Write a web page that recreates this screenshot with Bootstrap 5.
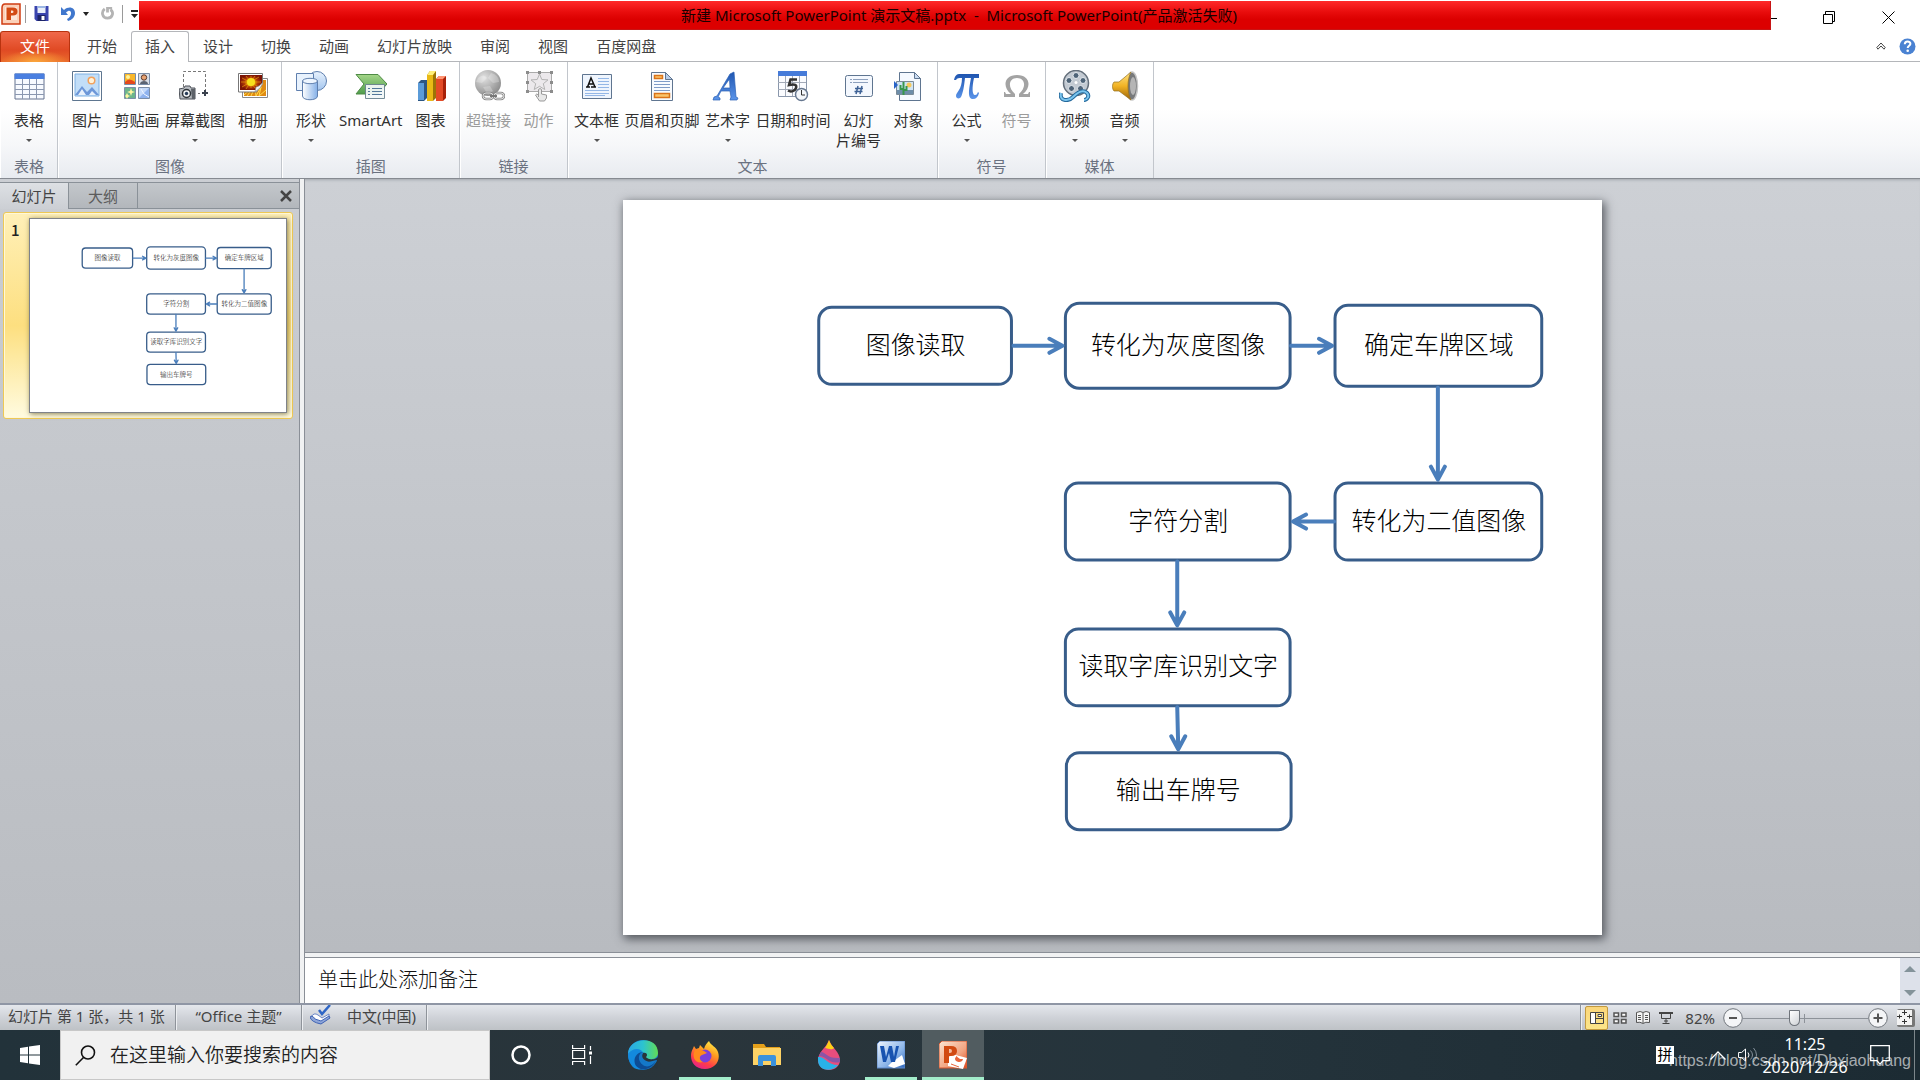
<!DOCTYPE html>
<html lang="zh-CN">
<head>
<meta charset="utf-8">
<meta name="viewport" content="width=device-width, initial-scale=1">
<title>新建 Microsoft PowerPoint 演示文稿.pptx - Microsoft PowerPoint</title>
<link href="https://cdn.jsdelivr.net/npm/bootstrap@5.3.0/dist/css/bootstrap.min.css" rel="stylesheet">
<style>
body{font-family:"Noto Sans","Noto Sans CJK SC",sans-serif;font-size:15px;line-height:20px;color:#444;background:#fff;overflow:hidden}
button{font:inherit;color:inherit;border:0;background:none;padding:0}
svg{display:block;flex:none}
/* title bar */
.titlebar{height:31px}
.quick{width:139px;padding-left:1px}
.quick .vline{width:1px;height:18px;background:#9a9a9a}
.caption-red{height:29px;margin-top:1px;padding-left:9px;background:linear-gradient(#ff2a2a,#e80c0c 40%,#dc0000 65%,#dc0000);border:1px solid #c81414;border-left:0;border-top:0;color:#1a0000}
.winbtns{width:149px}
.winbtns button{height:31px;display:flex;align-items:center;justify-content:center}
/* ribbon tabs */
.tabrow{height:31px;border-bottom:1px solid #b4b6ba}
.tabtools{gap:13px}
.rtab{height:31px;padding:0 14px;color:#444;text-decoration:none;line-height:31px}
.rtab.file-tab{width:70px;margin-right:3px;padding:0;text-align:center;color:#fff;border:1px solid #b8330f;border-bottom:0;border-radius:3px 3px 0 0;background:radial-gradient(ellipse 34px 12px at 50% 100%,#fba73c,rgba(251,140,50,0)),linear-gradient(#f0694a,#e04a24 60%,#ea6a2c);line-height:28px}
.rtab.on{background:#fff;border:1px solid #b4b6ba;border-bottom:0;border-radius:3px 3px 0 0;padding:0 13px;line-height:29px}
/* ribbon */
.ribbon{height:117px;background:linear-gradient(#fff 0,#fff 40%,#f6f7f9 72%,#e8ebf0);border-bottom:1px solid #868a91}
.rgroup{border-left:1px solid #fff;border-right:1px solid #c2c6cc;padding:8px 3px 0}
.rbtn{min-width:50px;padding:0 2px;height:82px;display:flex;flex-direction:column;align-items:center;color:#303030;white-space:nowrap}
.rbtn.wide{padding:0 3px}
.rbtn svg{margin-bottom:8px}
.rbtn:disabled{color:#9b9b9b}
.rbtn .tri{margin-top:9px}
.tri{width:0;height:0;border:3px solid transparent;border-top-color:#555;border-bottom:0}
.glabel{text-align:center;color:#6a7180;line-height:20px;margin-top:4px}
/* work area */
.sidepane{width:300px;border-right:1px solid #8a8f97;background:linear-gradient(#cbced3,#b9bcc1)}
.panetabs{height:27px;margin-top:3px;background:linear-gradient(#c3c7cb,#b2b6bb);border-top:1px solid #8a9198}
.ptab{width:69px;border-right:1px solid #8a9198;border-bottom:1px solid #8a9198;color:#5c5c5c;line-height:20px}
.ptab.on{background:linear-gradient(#dde0e4,#cccfd4);border-bottom:0;color:#444}
.panefill{border-bottom:1px solid #8a9198;padding-right:7px}
.thumbitem{margin:3px 6px 0 3px;height:207px;padding:5px 5px 5px 7px;border:1px solid #efc954;border-radius:3px;box-shadow:inset 0 0 0 1px #fff8d8;background:linear-gradient(#fff0b8,#fddf80 55%,#fde9a0 70%,#fffbe0)}
.thumbnum{width:18px;padding-top:2px;font-family:"Noto Sans CJK SC",sans-serif;font-weight:500;line-height:20px;color:#222}
.thumbpic{width:260px;height:195px;border:1px solid #7f838a;background:#fff;box-shadow:1px 1px 5px rgba(90,80,30,.7)}
.vsplit{width:4px;background:#f1f2f3}
.editor{border-left:1px solid #8a8f97}
.stage{padding:21px 17px 17px;min-height:0;background:linear-gradient(#cdd0d5,#b8bbc0);border-bottom:1px solid #8a8f97;box-shadow:inset 0 3px 3px -2px #a3a7ad}
.slide{height:100%;aspect-ratio:981/736;background:#fff;box-shadow:2px 3px 9px 1px rgba(50,54,60,.75)}
.flow{font-family:"Noto Sans CJK SC",sans-serif;font-weight:300;font-size:25px;text-anchor:middle;fill:#000}
.flow rect{fill:#fff;stroke:#385d8a;stroke-width:3}
.flow path{fill:none;stroke:#4a7ebb;stroke-width:4;stroke-linecap:round;stroke-linejoin:round}
.thumbpic .flow rect,.thumbpic .flow path{stroke-width:5}
.hsplit{height:4px;background:#f1f2f3}
.notes{height:46px;border-top:1px solid #8a8f97;background:#fff}
.notes textarea{border:0;resize:none;outline:0;padding:9px 13px 0;font-family:"Noto Sans CJK SC",sans-serif;font-weight:300;font-size:20px;line-height:24px;overflow:hidden}
.notes textarea::placeholder{color:#111;opacity:1}
.sbar{width:20px;background:#dde1ea;padding:8px 0 7px}
.sbar .tri{border-width:6px;border-top-color:#84939a;border-bottom:0}
.sbar .tri.up{border-top:0;border-bottom:6px solid #84939a}
/* status bar */
.statusbar{height:27px;border-top:2px solid #8f96a5;background:linear-gradient(#e4e7ec,#cfd2d8 50%,#bec2c6)}
.scell{border-right:1px solid #8e939a;box-shadow:1px 0 0 #eceef1;height:25px;line-height:23px;color:#444}
.viewbtn{width:23px;height:24px;display:flex;align-items:center;justify-content:center}
.viewbtn.on{border:1px solid #c39a3f;border-radius:2px;background:linear-gradient(#fbd67a,#fce68a)}
.zoomr{width:125px;height:20px;appearance:none;-webkit-appearance:none;margin:0;background:linear-gradient(#8d9299,#8d9299) 61px 6px/1px 9px no-repeat,linear-gradient(#8d9299,#8d9299) 0 10px/100% 1px no-repeat}
.zoomr::-webkit-slider-thumb{-webkit-appearance:none;width:11px;height:16px;background:linear-gradient(135deg,#fff,#cfd2d6);border:1px solid #6f747b;border-radius:1px 1px 6px 6px}
/* taskbar */
.taskbar{height:50px;background:linear-gradient(90deg,#22323a,#2a353b 35%,#25343c 60%,#1c2b33);color:#fff}
.startbtn{width:60px}
.searchbox{width:430px;background:#f1f1f1;border:1px solid #c8c8c8;padding-left:14px;gap:14px}
.searchbox input{border:0;background:none;outline:0;font-size:19px;line-height:28px;padding:0;min-width:0;color:#222;font-weight:350}
.searchbox input::placeholder{color:#222;opacity:1}
.tbtn{width:62px;height:50px;display:flex;align-items:center;justify-content:center;border:solid transparent;border-width:3px 0}
.tbtn.slim{width:61px}
.tbtn.run{width:52px;margin:0 5px;border-bottom-color:#a3edcb}
.tbtn.cur{background:#515c60;border-bottom-color:#a3edcb;border-top-color:#515c60}
.traymain{gap:36px}
.ime{width:18px;height:18px;background:#fff;color:#000;font-size:15px;line-height:17px;text-align:center}
.clock{width:94px;padding-top:3px;margin-right:2px;font-size:16px;line-height:23px;text-align:center}
.watermark{position:absolute;right:9px;bottom:8px;font-family:"Liberation Sans",Arial,sans-serif;font-size:16px;line-height:22px;color:rgba(255,255,255,.62)}
.deskline{width:6px;border-left:1px solid #7c868b}
</style>
<script src="https://cdn.jsdelivr.net/npm/bootstrap@5.3.0/dist/js/bootstrap.bundle.min.js"></script>
</head>
<body class="d-flex flex-column vh-100">
<svg width="0" height="0" class="position-absolute" aria-hidden="true">
<defs>
<linearGradient id="gBlue" x1="0" y1="0" x2="0" y2="1"><stop offset="0" stop-color="#e8f2fd"/><stop offset="1" stop-color="#a3c5ee"/></linearGradient>
<linearGradient id="gCyl" x1="0" x2="1"><stop offset="0" stop-color="#fff"/><stop offset="1" stop-color="#84b0e8"/></linearGradient>
<linearGradient id="gGrn" x1="0" y1="0" x2="0" y2="1"><stop offset="0" stop-color="#a4d688"/><stop offset="1" stop-color="#4e9c4c"/></linearGradient>
<linearGradient id="gDeep" x1="0" y1="0" x2="0" y2="1"><stop offset="0" stop-color="#1f55b0"/><stop offset="1" stop-color="#5b95ea"/></linearGradient>
<radialGradient id="gGrey" cx=".35" cy=".3" r=".8"><stop offset="0" stop-color="#e2e2e2"/><stop offset="1" stop-color="#858585"/></radialGradient>
<radialGradient id="gFlower"><stop offset="0" stop-color="#fff25a"/><stop offset=".35" stop-color="#e8a800"/><stop offset=".6" stop-color="#b33c08"/><stop offset="1" stop-color="#7c1405"/></radialGradient>
<linearGradient id="gGold" x1="0" y1="0" x2="0" y2="1"><stop offset="0" stop-color="#ffe487"/><stop offset=".5" stop-color="#f2b324"/><stop offset="1" stop-color="#9a6208"/></linearGradient>
<linearGradient id="gEdge1" x1="0" y1="0" x2="1" y2="0"><stop offset="0" stop-color="#2aa7e6"/><stop offset=".5" stop-color="#2cc3d0"/><stop offset="1" stop-color="#62dc55"/></linearGradient>
<linearGradient id="gFox" x1=".8" y1="0" x2=".3" y2="1"><stop offset="0" stop-color="#fff04a"/><stop offset=".4" stop-color="#ff9a1f"/><stop offset=".75" stop-color="#ff3c4a"/><stop offset="1" stop-color="#e5238a"/></linearGradient>
<linearGradient id="gWord" x1="0" y1="0" x2="1" y2="1"><stop offset="0" stop-color="#f2f7fd"/><stop offset=".6" stop-color="#8ab4e8"/><stop offset="1" stop-color="#2c64b8"/></linearGradient>
<linearGradient id="gPpt" x1="0" y1="0" x2="1" y2="1"><stop offset="0" stop-color="#fbe6d4"/><stop offset=".6" stop-color="#f1a481"/><stop offset="1" stop-color="#dc4b20"/></linearGradient>
</defs>
</svg>

<header>
<div class="titlebar d-flex">
  <div class="quick d-flex align-items-center pb-1">
    <svg width="20" height="22" viewBox="0 0 20 22"><path d="M4 1h15v20H1V5q0-4 3-4z" fill="#fbd0b8" stroke="#cf3c12" stroke-width="1.500"/><path d="M4 4h12v13H4z" fill="#fff" opacity=".45"/><path d="M5.500 4.500h4v0h2.500q4.500 0 4.500 4T12 12.500h-2V17H5.500zM10 7.500v2.500h1q1.500 0 1.500-1.200T11 7.500z" fill="#d34a14" fill-rule="evenodd"/></svg>
    <span class="vline ms-1"></span>
    <button class="ms-2" aria-label="保存"><svg width="15" height="15" viewBox="0 0 14 15"><path d="M0 0h14v15H2L0 13z" fill="#3a44ae"/><path d="M3 0h8v7H3z" fill="#e9effa"/><path d="M3 0h8v2H3z" fill="#9cb7e4"/><path d="M3 9h8v6H3z" fill="#1d2468"/><path d="M7 10h3v4H7z" fill="#fff"/></svg></button>
    <button class="ms-2 ps-1" aria-label="撤消"><svg width="14" height="16" viewBox="0 0 14 16"><path d="M0 1v8h7L5 6.500C8 3.500 10.500 4.500 10 8c-.5 2.500-2 4-4 5l1 2c4-1 7-4 7-8 0-5.500-6-7.500-11-3z" fill="#4077cd"/></svg></button>
    <button class="ms-2" aria-label="撤消列表"><svg width="6" height="4"><path d="M0 0h6L3 4z" fill="#222"/></svg></button>
    <button class="ms-2 ps-1" aria-label="重复"><svg width="13" height="13" viewBox="0 0 14 14"><path d="M4 2C0 5 1 12 7 12s7-7 3-9M7 6V1h5" fill="none" stroke="#b4b4b4" stroke-width="3"/></svg></button>
    <span class="vline ms-2"></span>
    <button class="ms-2" aria-label="自定义快速访问工具栏"><svg width="7" height="8"><path d="M0 0h7v2H0zM0 4h7L3.500 8z" fill="#222"/></svg></button>
  </div>
  <div class="caption-red flex-fill d-flex align-items-center justify-content-center"><span>新建 Microsoft PowerPoint 演示文稿.pptx&nbsp; -&nbsp; Microsoft PowerPoint(产品激活失败)</span></div>
  <div class="winbtns d-flex">
    <button style="width:29px" class="justify-content-start" aria-label="最小化"><svg width="6" height="6"><path d="M0 5h6v1H0z"/></svg></button>
    <button style="width:58px" class="pt-1" aria-label="还原"><svg width="12" height="13" viewBox="0 0 12 13" fill="none" stroke="#000"><path d="M.5 3.500h9v9h-9zM2.500 3V.5h9v10H10"/></svg></button>
    <button style="width:60px" class="pt-1" aria-label="关闭"><svg width="13" height="13" viewBox="0 0 13 13" stroke="#000"><path d="M.5.5l12 12M12.500.5l-12 12"/></svg></button>
  </div>
</div>
<nav class="tabrow d-flex" aria-label="功能区">
  <a href="#" class="rtab file-tab">文件</a>
  <a href="#" class="rtab">开始</a><a href="#" class="rtab on" aria-current="page">插入</a><a href="#" class="rtab">设计</a><a href="#" class="rtab">切换</a><a href="#" class="rtab">动画</a><a href="#" class="rtab">幻灯片放映</a><a href="#" class="rtab">审阅</a><a href="#" class="rtab">视图</a><a href="#" class="rtab">百度网盘</a>
  <div class="tabtools ms-auto d-flex align-items-center pe-1">
    <button aria-label="折叠功能区"><svg width="10" height="8" viewBox="0 0 10 8" fill="#fff" stroke="#444"><path d="M.8 5.500L5 1l4.200 4.500L8 7.200 5 4 2 7.200z"/></svg></button>
    <button aria-label="帮助"><svg width="17" height="17" viewBox="0 0 17 17"><circle cx="8.500" cy="8.500" r="8" fill="#4a82d2"/><path d="M5.800 6.300c0-3.700 5.600-3.500 5.600-.5 0 2-2.700 2-2.700 4.200" fill="none" stroke="#fff" stroke-width="2"/><circle cx="8.700" cy="12.700" r="1.300" fill="#fff"/></svg></button>
  </div>
</nav>

<div class="ribbon d-flex">
 <section class="rgroup"><div class="d-flex">
  <button class="rbtn"><svg width="32" height="32" viewBox="0 0 32 32"><path d="M2 4h29v25H2z" fill="#f7faff" stroke="#64738f"/><path d="M1.500 3.500h30V9h-30z" fill="#4a7fe0"/><path d="M2 14.500h29M2 19.500h29M2 24.500h29M9.500 9v20M16.500 9v20M23.500 9v20" stroke="#8a97b0"/></svg>表格<span class="tri"></span></button>
 </div><div class="glabel">表格</div></section>

 <section class="rgroup"><div class="d-flex">
  <button class="rbtn"><svg width="32" height="32" viewBox="0 0 32 32"><path d="M1.500 1.500h29v29h-29z" fill="#fff" stroke="#5e7690"/><path d="M4 4h24v22H4z" fill="#c2def8" stroke="#7eb0e2"/><circle cx="20.500" cy="10.500" r="3.300" fill="#fff3da" stroke="#f2a25e" stroke-width="1.500"/><path d="M4 25l7-9 5 6 5-5 7 8z" fill="#6d97d8"/><path d="M7 25l4-6 4 6zM18 25l3-4 4 4z" fill="#e8f1fc"/></svg>图片</button>
  <button class="rbtn"><svg width="32" height="32" viewBox="0 0 32 32" stroke="#7b8ea8"><path d="M3.500 3.500h11v11h-11z" fill="#f9b729"/><path d="M4 12q4-5 10 0v2H4z" fill="#e5491d" stroke="none"/><circle cx="7" cy="7" r="2" fill="#fff39a" stroke="none"/><path d="M17.500 3.500h11v11h-11z" fill="#d9dee6"/><circle cx="23" cy="7.500" r="2.700" fill="#e8a271" stroke="#55362a"/><path d="M19 14c0-4 8-4 8 0z" fill="#5b6472" stroke="none"/><path d="M3.500 17.500h11v11h-11z" fill="#6cb58c"/><path d="M10 18l1 3 3 1-3 1-1 3-1-3-3-1 3-1zM6 23l1 2 2 1-2 1-1 2-1-2-1-1 1-1z" fill="#fff6a0" stroke="none"/><path d="M17.500 17.500h11v11h-11z" fill="#c5dafa"/><path d="M18 28l10-10v10z" fill="#8fb3ef" stroke="none"/><path d="M20 19l3 5 5 3" fill="none" stroke="#eef5ff"/></svg>剪贴画</button>
  <button class="rbtn wide"><svg width="32" height="32" viewBox="0 0 32 32"><path d="M4.500 17V1.500h22v22H19" fill="none" stroke="#777" stroke-dasharray="3 2"/><path d="M0 19l5-1 1-2h5l1 2h4v11H1z" fill="#b9bdc2" stroke="#4c5158"/><path d="M12 19h4v10h-3z" fill="#5d6268"/><circle cx="7.500" cy="23.500" r="4" fill="#f2f4f6" stroke="#30353a" stroke-width="1.500"/><circle cx="7.500" cy="23.500" r="1.700" fill="#273c58"/><path d="M26 20v6M23 23h6" stroke="#3a414e" stroke-width="2"/></svg>屏幕截图<span class="tri"></span></button>
  <button class="rbtn"><svg width="32" height="32" viewBox="0 0 32 32"><path d="M5.500 8.500h25v19h-25z" fill="#fff" stroke="#8a8a8a"/><path d="M7 10h22v16H7z" fill="#e08a12"/><path d="M14 26l4-9 1 9 5-9-2 9 7-6M7 25l8-7M10 26l6-8" stroke="#ffdb4a" fill="none"/><path d="M1.500 3.500h24V14l-6 8h-18z" fill="#fff" stroke="#777"/><path d="M3 5h22v9l-6 6H3z" fill="url(#gFlower)"/><path d="M14 6v12M5 8l17 9M5 17L22 7M4 12h20M9 6l9 12M18 6L9 19" stroke="#e8940c" opacity=".7"/><circle cx="14" cy="12" r="4" fill="#f6e01e"/><path d="M26 12q-1 6-8 10l1-5q3 0 7-5z" fill="#f4f4f4" stroke="#888" stroke-width=".7"/></svg>相册<span class="tri"></span></button>
 </div><div class="glabel">图像</div></section>

 <section class="rgroup"><div class="d-flex">
  <button class="rbtn"><svg width="32" height="32" viewBox="0 0 32 32" stroke="#5f7fae"><circle cx="22" cy="11" r="9.500" fill="url(#gBlue)"/><path d="M1.500 3.500h17v17h-17z" fill="#e8f2fd"/><path d="M7.500 11v15c0 5 15 5 15 0V11z" fill="url(#gCyl)"/><ellipse cx="15" cy="11" rx="7.500" ry="2.700" fill="#eef6ff"/></svg>形状<span class="tri"></span></button>
  <button class="rbtn wide"><svg width="32" height="32" viewBox="0 0 32 32"><path d="M1 4.500h22l9 9.500-9 10H1l8-10z" fill="url(#gGrn)" stroke="#4e8b45"/><path d="M10.500 14.500h19v14h-19z" fill="#f3f8f8" stroke="#6d8591" opacity=".94"/><path d="M17 18.500h10M17 21.500h10M17 24.500h10M13 18.500h2M13 21.500h2M13 24.500h2" stroke="#53789a"/></svg>SmartArt</button>
  <button class="rbtn"><svg width="32" height="32" viewBox="0 0 32 32"><path d="M3 13l3-3h6v18l-3 3H3z" fill="#2c5684"/><path d="M3 13h6v17H3z" fill="#5b9bd8"/><path d="M12 5l3-4h6v27l-3 3h-6z" fill="#9c7406"/><path d="M12 5h6v26h-6z" fill="#e9b916"/><path d="M12 5l3-4h6l-3 4z" fill="#fff07a"/><path d="M21 9l3-3h7v22l-3 3h-7z" fill="#a82109"/><path d="M21 9h7v22h-7z" fill="#e34a26"/><path d="M21 9l3-3h7l-3 3z" fill="#ff9574"/></svg>图表</button>
 </div><div class="glabel">插图</div></section>

 <section class="rgroup"><div class="d-flex">
  <button class="rbtn" disabled><svg width="32" height="32" viewBox="0 0 32 32"><circle cx="15" cy="13" r="13" fill="url(#gGrey)"/><path d="M5 8q6-5 9 0l-5 5-6-1zM18 3q8 2 8 9l-6 1-5-5zM10 17l7-1 3 5-5 4z" fill="#fff" opacity=".25"/><g fill="none" stroke="#888" stroke-width="2.500"><rect x="10" y="23" width="10" height="6" rx="3"/><rect x="21" y="23" width="10" height="6" rx="3"/></g><g fill="none" stroke="#ddd"><rect x="10" y="23" width="10" height="6" rx="3"/><rect x="21" y="23" width="10" height="6" rx="3"/></g><path d="M17 26h7" stroke="#777" stroke-width="2"/></svg>超链接</button>
  <button class="rbtn" disabled><svg width="32" height="32" viewBox="0 0 32 32"><path d="M4.500 2.500h24v19h-24z" fill="#ece9ec" stroke="#aaa"/><path d="M16.500 4l2.300 5.500 6.200.4-4.700 3.800 1.500 5.800-5.300-3.200-5.300 3.200 1.500-5.800L8 9.900l6.200-.4z" fill="none" stroke="#b4b4b4"/><path d="M3 1h3v3H3zM15 1h3v3h-3zM27 1h3v3h-3zM3 11h3v3H3zM27 11h3v3h-3zM3 20h3v3H3zM27 20h3v3h-3z" fill="#8c8c8c"/><path d="M15.500 27V19.500q1.500-2 3 0V24l5 1v3l-2 3h-5l-4-6q1-2 3 0z" fill="#e8e8e8" stroke="#999"/></svg>动作</button>
 </div><div class="glabel">链接</div></section>

 <section class="rgroup"><div class="d-flex">
  <button class="rbtn"><svg width="32" height="32" viewBox="0 0 32 32"><path d="M1.500 4.500h29v24h-29z" fill="#eff5fd" stroke="#5f7590" /><path d="M17 8.500h11M17 11.500h11M17 14.500h11M17 17.500h11M4 20.500h24M4 23.500h24M4 25.500h20" stroke="#94b7e6"/><path d="M5 17h4M10 17h5M6.500 17L10 8l4 9M8 14h4" stroke="#111" stroke-width="1.500" fill="none"/></svg>文本框<span class="tri"></span></button>
  <button class="rbtn wide"><svg width="32" height="32" viewBox="0 0 32 32"><path d="M5.500 2.500h14l7 7v21h-21z" fill="#f8fbff" stroke="#5f7590"/><path d="M19.500 2.500v7h7z" fill="#b7cce8" stroke="#5f7590"/><path d="M8.500 5.500h8v3h-8zM8.500 23.500h15v4h-15z" fill="#fbc46b" stroke="#d9731a" stroke-width="1.500"/><path d="M8 11.500h16M8 14.500h16M8 17.500h16M8 20.500h16" stroke="#7f9cc8"/></svg>页眉和页脚</button>
  <button class="rbtn"><svg width="32" height="32" viewBox="0 0 32 32"><path d="M22 2l2 25 2 1-1 2h-7l1-3-1-6h-9l-3 6 2 1v2H1l1-3 3-1L18 4zM17.500 9L11 18h7z" fill="url(#gDeep)" fill-rule="evenodd" stroke="#2a60b4" stroke-width=".7"/></svg>艺术字<span class="tri"></span></button>
  <button class="rbtn wide"><svg width="32" height="32" viewBox="0 0 32 32"><path d="M1.500 2.500h28v24h-28z" fill="#fbfcff" stroke="#8a97ab"/><path d="M1 1h29v5H1z" fill="#467bd9"/><path d="M1 12.500h28M1 19.500h28M8.500 6v20M15.500 6v20M22.500 6v20" stroke="#a4abb8"/><path d="M20 9.500h-6.500L12 15c6-1.500 8 0 7 3s-5 4.500-8 2.500" fill="none" stroke="#333" stroke-width="2.500"/><circle cx="24.500" cy="24.500" r="6" fill="#f4f7fb" stroke="#66778f" stroke-width="1.500"/><path d="M24.500 20v5h3.500" fill="none" stroke="#333"/></svg>日期和时间</button>
  <button class="rbtn"><svg width="32" height="32" viewBox="0 0 32 32"><rect x="2.500" y="5.500" width="27" height="21" rx="2" fill="#f4f8fe" stroke="#5f7590"/><path d="M10 9.500h15M10 12.500h15M7 9.500h2M7 12.500h2" stroke="#8da0bd"/><path d="M15 16l-2 8M19 16l-2 8M12 18.500h8M11.500 21.500h8" stroke="#3e6296" stroke-width="1.500"/></svg>幻灯<br>片编号</button>
  <button class="rbtn"><svg width="32" height="32" viewBox="0 0 32 32"><path d="M6.500 2.500h15l6 6v22h-21z" fill="#f5f9ff" stroke="#5f7590"/><path d="M21.500 2.500v6h6z" fill="#cbdcf2" stroke="#5f7590"/><path d="M3.500 11.500h17v13h-17z" fill="#cfe4f4" stroke="#7b8b98"/><path d="M4 20h16v4H4z" fill="#6d8da9"/><circle cx="16" cy="15" r="2.500" fill="#f7c85a"/><path d="M10.500 12v13M7.500 15v4h3M13.500 16v4h-3" fill="none" stroke="#37964b" stroke-width="2"/><path d="M1 11l4 4-4 4z" fill="#2763c8"/></svg>对象</button>
 </div><div class="glabel">文本</div></section>

 <section class="rgroup"><div class="d-flex">
  <button class="rbtn"><svg width="32" height="32" viewBox="0 0 32 32"><path d="M3 10c1-5 3-6 6-6h19v4h-5c-2 9-2 17 1 17 2 0 2-1 3-3l1 1c-1 4-3 6-6 6-6 0-4-10-2-21h-6c-1 9-2 15-4 19-1 2-5 2-5-1 0-4 6-6 6-18-3 0-5 0-6 2z" fill="url(#gDeep)"/></svg>公式<span class="tri"></span></button>
  <button class="rbtn" disabled><svg width="32" height="32" viewBox="0 0 32 32"><path d="M3 22h1l1 2h5C1 17 3 5 16 5s15 12 6 19h5l1-2h1v5H18v-3c8-7 6-16-2-16s-10 9-2 16v3H3z" fill="#a3a3a3"/></svg>符号</button>
 </div><div class="glabel">符号</div></section>

 <section class="rgroup"><div class="d-flex">
  <button class="rbtn"><svg width="32" height="32" viewBox="0 0 32 32"><circle cx="17" cy="13" r="12.500" fill="#c3cad2" stroke="#646f7b" stroke-width="1.500"/><g fill="#4f6478" stroke="#e6ebf0"><circle cx="17" cy="5.500" r="3"/><circle cx="24" cy="10.500" r="3"/><circle cx="21.500" cy="18.500" r="3"/><circle cx="12.500" cy="18.500" r="3"/><circle cx="10" cy="10.500" r="3"/></g><circle cx="17" cy="12.500" r="1.500" fill="#fff"/><path d="M2 23c-2 8 7 9 12 4s10-8 14-4c3 3 0 7-3 7" fill="none" stroke="#24699c" stroke-width="4"/><path d="M2 23c-2 8 7 9 12 4s10-8 14-4c3 3 0 7-3 7" fill="none" stroke="#7bc5ee" stroke-width="2"/></svg>视频<span class="tri"></span></button>
  <button class="rbtn"><svg width="32" height="32" viewBox="0 0 32 32"><ellipse cx="23" cy="16" rx="5.500" ry="14" fill="#77797b" stroke="#c6c6c6" stroke-width="1.500"/><ellipse cx="24" cy="16" rx="3" ry="9" fill="#b5b5b5"/><path d="M5 12h5L22 2c-4 7-4 21 0 28L10 21H5c-2-2-2-7 0-9z" fill="url(#gGold)" stroke="#95701c" stroke-width=".7"/></svg>音频<span class="tri"></span></button>
 </div><div class="glabel">媒体</div></section>
</div>
</header>

<main class="d-flex flex-fill" style="min-height:0">
 <aside class="sidepane d-flex flex-column flex-shrink-0">
  <div class="panetabs d-flex">
   <button class="ptab on">幻灯片</button><button class="ptab">大纲</button>
   <div class="panefill flex-fill d-flex align-items-center justify-content-end"><button aria-label="关闭窗格"><svg width="12" height="12" viewBox="0 0 12 12"><path d="M1 1l10 10M11 1L1 11" stroke="#444" stroke-width="2.500"/></svg></button></div>
  </div>
  <div class="thumbitem d-flex">
   <div class="thumbnum">1</div>
   <div class="thumbpic"><svg class="flow" width="100%" height="100%" viewBox="-2 -2 981 736" id="mini" role="img" aria-label="幻灯片 1"></svg></div>
  </div>
 </aside>
 <div class="vsplit flex-shrink-0"></div>
 <div class="editor d-flex flex-column flex-fill">
  <div class="stage flex-fill d-flex justify-content-center">
   <div class="slide"><svg class="flow" width="100%" height="100%" viewBox="2 0 981 736" id="big">
    <rect x="198" y="107.500" width="193" height="77" rx="13"/><text x="295" y="154">图像读取</text>
    <rect x="445" y="103.500" width="225" height="85" rx="14"/><text x="558" y="154">转化为灰度图像</text>
    <rect x="715" y="105.500" width="207" height="81" rx="13"/><text x="819" y="154">确定车牌区域</text>
    <rect x="445" y="283.500" width="225" height="77" rx="13"/><text x="558" y="330">字符分割</text>
    <rect x="715" y="283.500" width="207" height="77" rx="13"/><text x="819" y="330">转化为二值图像</text>
    <rect x="445" y="429.500" width="225" height="77" rx="13"/><text x="558" y="476">读取字库识别文字</text>
    <rect x="446" y="553.500" width="225" height="77" rx="13"/><text x="558" y="600">输出车牌号</text>
    <path d="M393 146h48M429 139l13 7-13 7M671 146h40M699 139l13 7-13 7M818 188v91M811 267l7 13 7-13M714 322h-40M686 315l-13 7 13 7M557 362v63M550 413l7 13 7-13M557 508l1 41M551 537l7 13 7-13"/>
   </svg></div>
  </div>
  <div class="hsplit"></div>
  <div class="notes d-flex"><textarea class="flex-fill" aria-label="备注" placeholder="单击此处添加备注"></textarea>
   <div class="sbar d-flex flex-column justify-content-between align-items-center"><span class="tri up"></span><span class="tri"></span></div></div>
 </div>
</main>

<footer>
<div class="statusbar d-flex">
 <div class="scell ps-2" style="width:176px">幻灯片 第 1 张，共 1 张</div>
 <div class="scell text-center" style="width:126px">“Office 主题”</div>
 <div class="scell d-flex ps-2" style="width:125px"><svg width="21" height="20" viewBox="0 0 21 20"><path d="M1 12q3-5 7-2l4 3 7-4v4l-8 5z" fill="#fff" stroke="#6a86c8"/><path d="M0 12q1 5 11 7l9-6-1-2-8 5q-6-1-9-5z" fill="#8fa6d8" stroke="#3d62b4"/><path d="M9 5l3 4 8-9" fill="none" stroke="#2f66c6" stroke-width="2.500"/></svg><span class="ms-3">中文(中国)</span></div>
 <div class="ms-auto d-flex align-items-center pe-1">
  <div class="scell me-1"></div>
  <button class="viewbtn on" aria-label="普通视图"><svg width="14" height="12" viewBox="0 0 14 12" fill="none" stroke="#444"><path d="M1 1h4v10H1z" fill="#fff" stroke="none"/><path d="M.5.5h13v11H.5zM5.500 1v10M6 6.500h8"/><path d="M8 2.500h3.500v2H8z" fill="#fff"/></svg></button>
  <button class="viewbtn" aria-label="幻灯片浏览"><svg width="14" height="12" viewBox="0 0 14 12" fill="#fff" stroke="#555" stroke-width="1.500"><path d="M1 1h4.500v3.500H1zM8.500 1H13v3.500H8.500zM1 7.500h4.500V11H1zM8.500 7.500H13V11H8.500z"/></svg></button>
  <button class="viewbtn" aria-label="阅读视图"><svg width="14" height="13" viewBox="0 0 14 13" fill="#f5f5f5" stroke="#555"><path d="M.5 1.500q4-2 6.500 0 3-2 6.500 0v10q-4-1-6.500 1-3-2-6.500-1zM7 2v10M2 4.500h3M2 6.500h3M2 8.500h3M9 4.500h3M9 6.500h3M9 8.500h3"/></svg></button>
  <button class="viewbtn" aria-label="幻灯片放映视图"><svg width="14" height="12" viewBox="0 0 14 12" fill="none" stroke="#444"><path d="M0 1h14" stroke-width="2"/><path d="M2.500 2v4.500h9V2M7 6v5M3.500 11.500h7"/><path d="M5 9h4"/></svg></button>
  <span class="mx-2">82%</span>
  <button aria-label="缩小"><svg width="20" height="20" viewBox="0 0 20 20"><circle cx="10" cy="10" r="9.300" fill="#f4f5f7" stroke="#6f747b"/><path d="M6 10h8" stroke="#555" stroke-width="2"/></svg></button>
  <input type="range" class="zoomr" min="0" max="100" value="40" aria-label="显示比例">
  <button aria-label="放大"><svg width="20" height="20" viewBox="0 0 20 20"><circle cx="10" cy="10" r="9.300" fill="#f4f5f7" stroke="#6f747b"/><path d="M5.500 10h9M10 5.500v9" stroke="#555" stroke-width="2"/></svg></button>
  <button class="ms-2" aria-label="适应窗口"><svg width="20" height="20" viewBox="0 0 20 20"><rect x="1" y="1" width="18" height="18" rx="2" fill="#777"/><path d="M1 2h15v15H1z" fill="#f3f3f3"/><path d="M8.500 2v5M6 4.500h5M8.500 11v5M6 13.500h5M1 8.500h5M3.500 6.500v4M11 8.500h5M13.500 6.500v4" stroke="#333"/></svg></button>
 </div>
</div>
<div class="taskbar d-flex position-relative">
 <button class="startbtn d-flex align-items-center justify-content-center" aria-label="开始"><svg width="20" height="20" viewBox="0 0 20 20" fill="#fff"><path d="M0 3l8-1.200v7.700H0zM9 1.600L20 0v9.500H9zM0 10.500h8v7.700L0 17zM9 10.500h11V20L9 18.400z"/></svg></button>
 <label class="searchbox d-flex align-items-center"><svg width="21" height="21" viewBox="0 0 21 21" fill="none" stroke="#111" stroke-width="1.600"><circle cx="13" cy="7.500" r="6.500"/><path d="M8.500 12.500L.8 20.200"/></svg><input type="text" class="flex-fill" aria-label="搜索" placeholder="在这里输入你要搜索的内容"></label>
 <button class="tbtn slim" aria-label="Cortana"><svg width="20" height="20" viewBox="0 0 20 20"><circle cx="10" cy="10" r="8.500" fill="none" stroke="#fff" stroke-width="2.500"/></svg></button>
 <button class="tbtn slim" aria-label="任务视图"><svg width="20" height="20" viewBox="0 0 20 20" fill="none" stroke="#fff" stroke-width="1.200"><path d="M.6 0v3.500h12V0M.6 5.500h12v8H.6zM.6 20v-3.500h12V20M18.500 1v4M18.500 11v8"/><path d="M17 6.500h3v3h-3z" fill="#fff" stroke="none"/></svg></button>
 <button class="tbtn" aria-label="Edge"><svg width="30" height="30" viewBox="0 0 30 30"><circle cx="15" cy="15" r="15" fill="#1478c8"/><path d="M0 14c5-7 13-6 15-2-7 1-7 13 1 16-9 5-16-4-16-14z" fill="#138ade"/><path d="M15 12c-5 1-6 9 0 13 4 3 9 1 13-4-6 11-18 10-21 3-2-6 2-12 8-12z" fill="#0d4c94"/><path d="M15.500 12.500c-4 5 2 10 7 9l6-1.500 1 1-4 6 6 2V13c0 7-10 8-12 4-1-2 1-2 0-4.500z" fill="#28343b"/><path d="M15 12.500c3 0 4 1 4 2.500s-2 2 0 3c5 3 11 0 11-5C30-5 0-3 0 14c5-7 13-6 15-1.500z" fill="url(#gEdge1)"/></svg></button>
 <button class="tbtn run" aria-label="Firefox"><svg width="28" height="29" viewBox="0 0 28 29"><path d="M14 28C4 28 0 21 0 15 0 10 2 8 3 5l2 3 3-1 1-3 4 4c1-4 3-6 5-8 2 5 7 5 9 11 3 9-3 17-13 17z" fill="url(#gFox)"/><circle cx="14" cy="15" r="6.500" fill="#7a3fdc"/><path d="M4 9c5-2 7 0 9 1l3 2-5 2c-3 1-3 5 1 7-7 2-12-4-8-12z" fill="#ff8a1c"/></svg></button>
 <button class="tbtn" aria-label="文件资源管理器"><svg width="28" height="24" viewBox="0 0 28 24"><path d="M0 1h11l2 3h14v5H0z" fill="#e5a01a"/><path d="M0 5h28v17H0z" fill="#fdd265"/><path d="M5 23V14q0-2 2-2h14q2 0 2 2v9h-5v-5h-8v5z" fill="#3b92dc"/></svg></button>
 <button class="tbtn" aria-label="画图"><svg width="24" height="30" viewBox="0 0 24 30"><path d="M12 0c3 8 11 12 11 20 0 6-5 10-11 10S1 26 1 20C1 12 9 8 12 0z" fill="#e84d7d"/><path d="M12 0c1 3 3 6 5 8-3 3-6 0-9 0 2-3 3-5 4-8z" fill="#fcd116"/><path d="M4 12c5 0 6 7 19 6v4C12 25 10 16 2 16z" fill="#8b54a6"/><path d="M1 17c7-1 9 8 20 8-5 7-20 7-20-5z" fill="#29b2e8"/></svg></button>
 <button class="tbtn run" aria-label="Word"><svg width="28" height="28" viewBox="0 0 28 28"><path d="M3 0h25v27H0V3z" fill="url(#gWord)" stroke="#5f8acb"/><path d="M11 25l3-3 11-8 3 9-11 4z" fill="#fff"/><path d="M3 5h4l2 11 3-11h3l2 11 2-11h3l-4 16h-4l-2-9-3 9H6z" fill="#1853b0"/></svg></button>
 <button class="tbtn cur" aria-label="PowerPoint"><svg width="28" height="28" viewBox="0 0 28 28"><path d="M3 0h25v27H0V3z" fill="url(#gPpt)" stroke="#d9562c"/><path d="M9 17l4-4 15 4-4 11-15-3z" fill="#fff"/><path d="M5 5h7q6 0 6 5t-6 5h-2v7H5zM10 8v4h1q2 0 2-2t-2-2z" fill="#d14a12" fill-rule="evenodd"/><path d="M17 15h4a4 3 0 1 0 3 3h-3z" fill="#e8643a"/><path d="M12 23l8 3" stroke="#e8643a"/></svg></button>
 <div class="ms-auto d-flex">
  <div class="traymain d-flex align-items-center">
   <span class="ime">拼</span>
   <div class="d-flex align-items-center">
   <button aria-label="显示隐藏的图标"><svg width="16" height="9" viewBox="0 0 16 9" fill="none" stroke="#fff" stroke-width="1.300"><path d="M.5 8.500L8 1l7.500 7.500"/></svg></button>
   <button class="ms-2 ps-1" aria-label="音量"><svg width="20" height="16" viewBox="0 0 20 16" fill="none" stroke="#fff"><path d="M.6 5.500h3L7.500 2v12l-4-3.500h-3zM10 5.500q2 2.500 0 5"/><path d="M12.500 3.500q4 4.500 0 9M15.500 1q6 7 0 14" stroke="#84909a"/></svg></button>
   </div>
  </div>
  <div class="clock"><div>11:25</div><div>2020/12/26</div></div>
  <button class="d-flex align-items-center ms-3" aria-label="通知"><svg width="20" height="20" viewBox="0 0 20 20" fill="none" stroke="#fff" stroke-width="1.300"><path d="M.7.700h18.600v15H13l-3 3.500-3-3.500H.7z"/></svg></button>
  <div class="deskline ms-4"></div>
 </div>
 <span class="watermark">https://blog.csdn.net/Dbxiaohuang</span>
</div>
</footer>
<script>
// the thumbnail shows the same drawing as the open slide
document.getElementById('mini').innerHTML = document.getElementById('big').innerHTML;
</script>
</body>
</html>
